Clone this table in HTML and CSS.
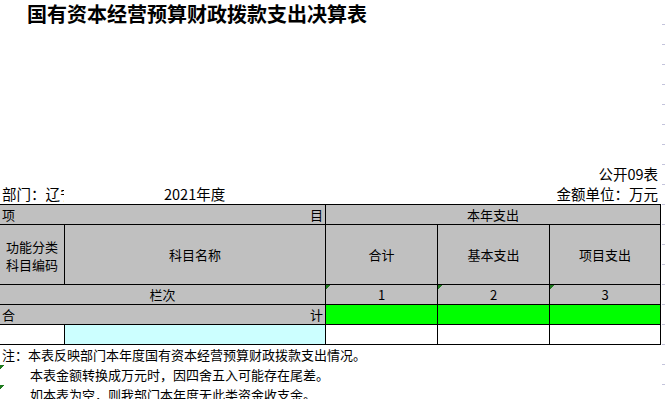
FILE: index.html
```html
<!DOCTYPE html>
<html lang="zh-CN">
<head>
<meta charset="utf-8">
<title>国有资本经营预算财政拨款支出决算表</title>
<link rel="stylesheet" href="styles.css">
</head>
<body>
<div class="page">
  <div class="sheet">
    <h1 class="title">国有资本经营预算财政拨款支出决算表</h1>
    <div class="code">公开09表</div>
    <div class="meta">
      <span class="dept">部门：辽宁省国资委</span>
      <span class="year">2021年度</span>
      <span class="unit">金额单位：万元</span>
    </div>
    <div class="grid">
      <div class="c span2 split"><span>项</span><span>目</span></div>
      <div class="c span3">本年支出</div>

      <div class="c two-line">功能分类<br>科目编码</div>
      <div class="c">科目名称</div>
      <div class="c">合计</div>
      <div class="c">基本支出</div>
      <div class="c">项目支出</div>

      <div class="c span2">栏次</div>
      <div class="c flag">1</div>
      <div class="c flag">2</div>
      <div class="c flag">3</div>

      <div class="c span2 split"><span>合</span><span>计</span></div>
      <div class="c green"></div>
      <div class="c green"></div>
      <div class="c green"></div>

      <div class="c white"></div>
      <div class="c cyan"></div>
      <div class="c white"></div>
      <div class="c white"></div>
      <div class="c white"></div>
    </div>
    <div class="notes">
      <div class="note">注：本表反映部门本年度国有资本经营预算财政拨款支出情况。</div>
      <div class="note indent flagged">本表金额转换成万元时，因四舍五入可能存在尾差。</div>
      <div class="note indent flagged">如本表为空，则我部门本年度无此类资金收支余。</div>
    </div>
  </div>
  <div class="ticks"></div>
</div>
</body>
</html>
```

FILE: styles.css
```css
html, body {
  margin: 0;
  padding: 0;
  background: #ffffff;
}

body {
  width: 665px;
  height: 399px;
  overflow: hidden;
  font-family: "Noto Sans CJK SC", "Noto Sans", sans-serif;
  color: #000000;
  font-size: 13px;
}

.page {
  display: flex;
  align-items: flex-start;
}

.sheet {
  width: 661px;
  flex: none;
}

.ticks {
  width: 3px;
  height: 375px;
  margin-left: 1px;
  margin-top: 24px;
  background: repeating-linear-gradient(to bottom, #c4c4dc 0 1px, transparent 1px 20px);
}

.title {
  margin: 0;
  height: 164px;
  line-height: 28px;
  padding-left: 27px;
  font-size: 20px;
  font-weight: 700;
  box-sizing: border-box;
}

.code {
  height: 20px;
  line-height: 20px;
  font-size: 14.5px;
  text-align: right;
  padding-right: 3px;
}

.meta {
  display: flex;
  height: 20px;
  line-height: 20px;
  font-size: 14.5px;
  white-space: nowrap;
}

.dept {
  width: 64px;
  padding-left: 2px;
  box-sizing: border-box;
  overflow: hidden;
  flex: none;
}

.year {
  margin-left: 100px;
}

.unit {
  margin-left: auto;
  padding-right: 3px;
}

.grid {
  display: grid;
  grid-template-columns: 64px 260px 111px 111px 110px;
  grid-template-rows: 19px 59px 19px 19px 19px;
  gap: 1px;
  padding: 1px 1px 1px 0;
  background: #000000;
}

.c {
  background: #c0c0c0;
  display: flex;
  align-items: center;
  justify-content: center;
  text-align: center;
  line-height: 19px;
  white-space: nowrap;
}

.span2 {
  grid-column: span 2;
}

.span3 {
  grid-column: span 3;
}

.split {
  justify-content: space-between;
  padding: 0 2px;
}

.two-line {
  line-height: 18px;
  padding-top: 2px;
  box-sizing: border-box;
}

.flag {
  background:
    linear-gradient(135deg, #1f7a1f 0 3px, transparent 3px) no-repeat 0 0 / 6px 6px,
    #c0c0c0;
}

.green {
  background: #00ff00;
}

.white {
  background: #ffffff;
}

.cyan {
  background: #ccffff;
}

.notes {
  line-height: 20px;
}

.note {
  height: 20px;
  padding-left: 2px;
  white-space: nowrap;
}

.indent {
  padding-left: 30px;
}

.flagged {
  background: linear-gradient(135deg, #1f7a1f 0 3px, transparent 3px) no-repeat 0 0 / 6px 6px;
}
```
